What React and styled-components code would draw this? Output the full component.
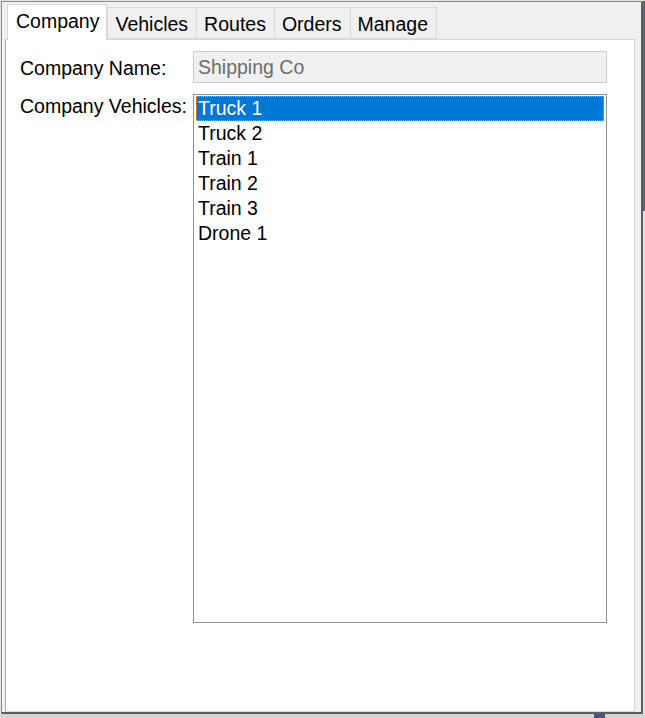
import React, { useState } from "react";
import styled, { createGlobalStyle } from "styled-components";

const GlobalStyle = createGlobalStyle`
  html, body {
    margin: 0;
    padding: 0;
    background: #dcdcdc;
  }
  * {
    box-sizing: border-box;
  }
`;

const tabs = ["Company", "Vehicles", "Routes", "Orders", "Manage"];
const vehicles = ["Truck 1", "Truck 2", "Train 1", "Train 2", "Train 3", "Drone 1"];

const App = () => {
  const [activeTab, setActiveTab] = useState("Company");
  const [selected, setSelected] = useState("Truck 1");

  return (
    <Screen>
      <GlobalStyle />
      <TopArea>
        <Window>
          <TabStrip>
            {tabs.map((tab) => (
              <Tab
                key={tab}
                $active={tab === activeTab}
                onClick={() => setActiveTab(tab)}
              >
                {tab}
              </Tab>
            ))}
          </TabStrip>
          <TabPage>
            <FormGrid>
              <Label $center>Company Name:</Label>
              <TextBox readOnly value="Shipping Co" />
              <Label>Company Vehicles:</Label>
              <ListBox>
                {vehicles.map((v) => (
                  <ListItem
                    key={v}
                    $selected={v === selected}
                    onClick={() => setSelected(v)}
                  >
                    {v}
                  </ListItem>
                ))}
              </ListBox>
            </FormGrid>
          </TabPage>
        </Window>
        <DesktopEdge />
      </TopArea>
      <BottomStrip>
        <TaskbarBlip />
      </BottomStrip>
    </Screen>
  );
};

const Screen = styled.div`
  width: 645px;
  height: 718px;
  display: flex;
  flex-direction: column;
  font-family: "Liberation Sans", Arial, sans-serif;
  font-size: 19.5px;
  color: #000;
  overflow: hidden;
`;

const TopArea = styled.div`
  display: flex;
  height: 714px;
  padding: 1px 0 0 1px;
  background: #e4e4e4;
`;

const Window = styled.div`
  width: 642px;
  height: 713px;
  display: flex;
  flex-direction: column;
  background: #f0f0f0;
  border: 1px solid #8c8c8c;
  border-right: 2px solid #5e5e5e;
  border-bottom: 2px solid #5e5e5e;
  padding: 1px 6px 0 3px;
`;

const DesktopEdge = styled.div`
  flex: 1;
  height: 210px;
  background: #56617d;
`;

const TabStrip = styled.div`
  display: flex;
  align-items: flex-end;
  height: 36px;
  padding-left: 2px;
  position: relative;
  z-index: 1;
`;

const Tab = styled.div`
  height: ${({ $active }) => ($active ? "36px" : "32px")};
  padding: ${({ $active }) => ($active ? "4px 7px 0 8px" : "4px 8px 0 7px")};
  margin-bottom: ${({ $active }) => ($active ? "-1px" : "0")};
  background: ${({ $active }) => ($active ? "#ffffff" : "#f0f0f0")};
  border: 1px solid #d9d9d9;
  border-bottom: ${({ $active }) => ($active ? "none" : "1px solid #d9d9d9")};
  margin-right: ${({ $active }) => ($active ? "0" : "-1px")};
  white-space: nowrap;
  line-height: 24px;
  cursor: default;
`;

const TabPage = styled.div`
  flex: 1;
  background: #ffffff;
  border: 1px solid #d9d9d9;
  border-left: 1px solid #a8a8a8;
  padding: 11px 0 0 14px;
`;

const FormGrid = styled.div`
  display: grid;
  grid-template-columns: 173px 414px;
  grid-template-rows: 32px 529px;
  row-gap: 11px;
`;

const Label = styled.div`
  align-self: ${({ $center }) => ($center ? "center" : "start")};
  padding-top: 1px;
  line-height: 22px;
  white-space: nowrap;
`;

const TextBox = styled.input`
  width: 100%;
  height: 32px;
  margin: 0;
  padding: 0 4px;
  background: #f0f0f0;
  border: 1px solid #cccccc;
  font-family: inherit;
  font-size: inherit;
  color: #6d6d6d;
  outline: none;
`;

const ListBox = styled.div`
  border: 1px solid #8f9399;
  background: #ffffff;
  padding: 1px 2px;
  display: flex;
  flex-direction: column;
`;

const ListItem = styled.div`
  height: 25px;
  line-height: 24px;
  padding-left: 2px;
  background: ${({ $selected }) => ($selected ? "#0078d7" : "transparent")};
  color: ${({ $selected }) => ($selected ? "#ffffff" : "#000000")};
  outline: ${({ $selected }) => ($selected ? "1px dotted #f0a050" : "none")};
  outline-offset: -1px;
  cursor: default;
`;

const BottomStrip = styled.div`
  flex: 1;
  display: flex;
  background: #d4d4d4;
  padding-left: 594px;
`;

const TaskbarBlip = styled.div`
  width: 11px;
  background: #47557a;
`;

export default App;
